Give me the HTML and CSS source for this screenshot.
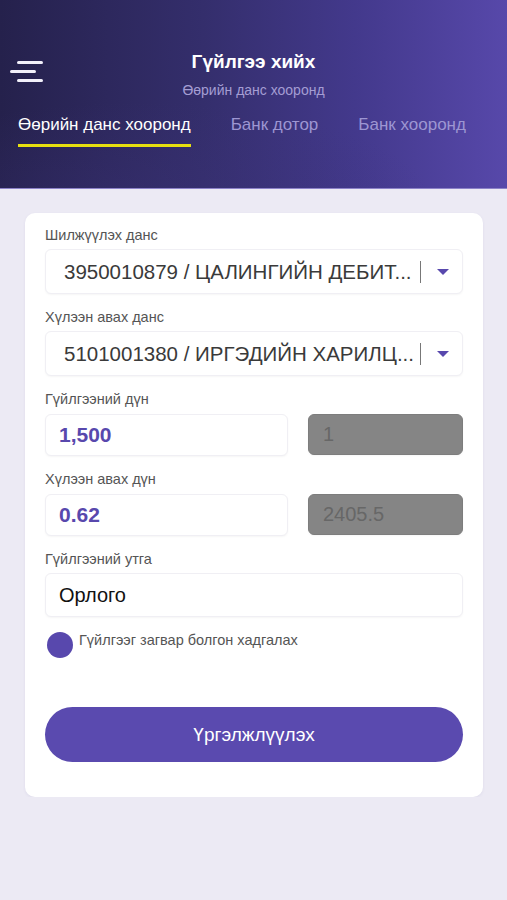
FILE: index.html
```html
<!DOCTYPE html>
<html lang="mn">
<head>
    <meta charset="UTF-8">
    <meta name="viewport" content="width=device-width, initial-scale=1.0">
    <title>Гүйлгээ хийх</title>
    <link rel="stylesheet" href="styles.css">
</head>
<body>
    <header class="header">
        <div class="top-bar">
            <div class="menu-btn">
                <span class="line line-short-right"></span>
                <span class="line line-left"></span>
                <span class="line line-short-right"></span>
            </div>
            <div class="titles">
                <div class="title">Гүйлгээ хийх</div>
                <div class="subtitle">Өөрийн данс хооронд</div>
            </div>
            <div></div>
        </div>

        <!-- Табууд -->
        <nav class="tabs">
            <div class="tab active">Өөрийн данс хооронд</div>
            <div class="tab">Банк дотор</div>
            <div class="tab">Банк хооронд</div>
        </nav>
    </header>

    <main class="card">
        <div class="field">
            <div class="label">Шилжүүлэх данс</div>
            <div class="box select">
                <span class="select-text">3950010879 / ЦАЛИНГИЙН ДЕБИТ...</span>
                <span class="sep"></span>
                <span class="caret"></span>
            </div>
        </div>

        <div class="field">
            <div class="label">Хүлээн авах данс</div>
            <div class="box select">
                <span class="select-text">5101001380 / ИРГЭДИЙН ХАРИЛЦ...</span>
                <span class="sep"></span>
                <span class="caret"></span>
            </div>
        </div>

        <div class="field">
            <div class="label amount-label">Гүйлгээний дүн</div>
            <div class="amount-row">
                <div class="box amount">1,500</div>
                <div class="box rate">1</div>
            </div>
        </div>

        <div class="field">
            <div class="label amount-label">Хүлээн авах дүн</div>
            <div class="amount-row">
                <div class="box amount">0.62</div>
                <div class="box rate">2405.5</div>
            </div>
        </div>

        <div class="field">
            <div class="label">Гүйлгээний утга</div>
            <div class="box text-box">Орлого</div>
        </div>

        <div class="save-row">
            <span class="radio"></span>
            <span class="save-text">Гүйлгээг загвар болгон хадгалах</span>
        </div>

        <button class="btn-continue">Үргэлжлүүлэх</button>
    </main>
</body>
</html>
```

FILE: styles.css
```css
body {
    margin: 0;
    padding: 0;
    background: #eceaf4;
    font-family: "Liberation Sans", Arial, sans-serif;
    color: #333;
}

.header {
    height: 189px;
    box-sizing: border-box;
    padding-top: 50px;
    background:
        radial-gradient(ellipse 420px 140px at 140px 200px, rgba(60, 50, 120, 0.35), transparent 70%),
        linear-gradient(90deg, #25214c 0%, #342e6c 40%, #43398c 70%, #5748aa 100%);
    border-bottom: 1px solid #8c82c8;
}

.top-bar {
    display: grid;
    grid-template-columns: 70px 1fr 70px;
    align-items: start;
}

.menu-btn {
    display: flex;
    flex-direction: column;
    gap: 6px;
    padding: 11px 0 0 10px;
    width: 34px;
}

.line {
    display: block;
    height: 3px;
    width: 26px;
    background: #f2f0fa;
    border-radius: 2px;
}

.line-short-right {
    margin-left: 7px;
}

.titles {
    text-align: center;
}

.title {
    color: #fff;
    font-size: 19px;
    font-weight: bold;
    line-height: 24px;
}

.subtitle {
    color: #a49dd3;
    font-size: 14px;
    line-height: 18px;
    margin-top: 7px;
}

.tabs {
    display: flex;
    gap: 40px;
    padding-left: 18px;
    margin-top: 15px;
}

.tab {
    color: #9d96d2;
    font-size: 17px;
    line-height: 21px;
    padding-bottom: 9px;
    border-bottom: 3px solid transparent;
}

.tab.active {
    color: #fff;
    border-bottom-color: #e6df10;
}

.card {
    display: block;
    background: #fff;
    margin: 24px 24px 0 25px;
    padding: 13px 20px 35px 20px;
    border-radius: 10px;
    box-shadow: 0 1px 3px rgba(80, 70, 140, 0.08);
}

.field {
    margin-bottom: 14px;
}

.label {
    font-size: 14.5px;
    line-height: 18px;
    color: #555;
    margin-bottom: 5px;
}

.amount-label {
    margin-bottom: 6px;
}

.box {
    background: #fff;
    border: 1px solid #f0eff4;
    border-radius: 6px;
    box-sizing: border-box;
    box-shadow: 0 1px 2px rgba(0, 0, 0, 0.04);
}

.select {
    height: 45px;
    display: flex;
    align-items: center;
    padding-left: 18px;
    padding-right: 13px;
}

.select-text {
    font-size: 20.5px;
    color: #3a3a3a;
    white-space: nowrap;
    flex: 1;
}

.sep {
    width: 1px;
    height: 22px;
    background: #777;
    margin-right: 16px;
}

.caret {
    width: 0;
    height: 0;
    border-left: 6px solid transparent;
    border-right: 6px solid transparent;
    border-top: 6px solid #5848ad;
}

.amount-row {
    display: flex;
    gap: 20px;
}

.amount {
    width: 243px;
    height: 42px;
    padding-left: 13px;
    display: flex;
    align-items: center;
    font-size: 21px;
    font-weight: bold;
    color: #5848ad;
}

.rate {
    flex: 1;
    height: 41px;
    background: #858585;
    border-color: #7d7d7d;
    padding-left: 14px;
    display: flex;
    align-items: center;
    font-size: 20px;
    color: #676767;
}

.text-box {
    height: 44px;
    padding-left: 13px;
    display: flex;
    align-items: center;
    font-size: 20px;
    color: #111;
}

.save-row {
    display: flex;
    align-items: flex-start;
    gap: 6px;
    padding-left: 2px;
    margin-top: 15px;
}

.radio {
    width: 26px;
    height: 26px;
    border-radius: 50%;
    background: #5848ad;
    flex-shrink: 0;
}

.save-text {
    font-size: 14.5px;
    color: #555;
    line-height: 16px;
}

.btn-continue {
    display: block;
    width: 100%;
    height: 55px;
    margin-top: 49px;
    border: none;
    border-radius: 28px;
    background: #5a4aaf;
    color: #fff;
    font-family: "Liberation Sans", Arial, sans-serif;
    font-size: 19px;
}
```
